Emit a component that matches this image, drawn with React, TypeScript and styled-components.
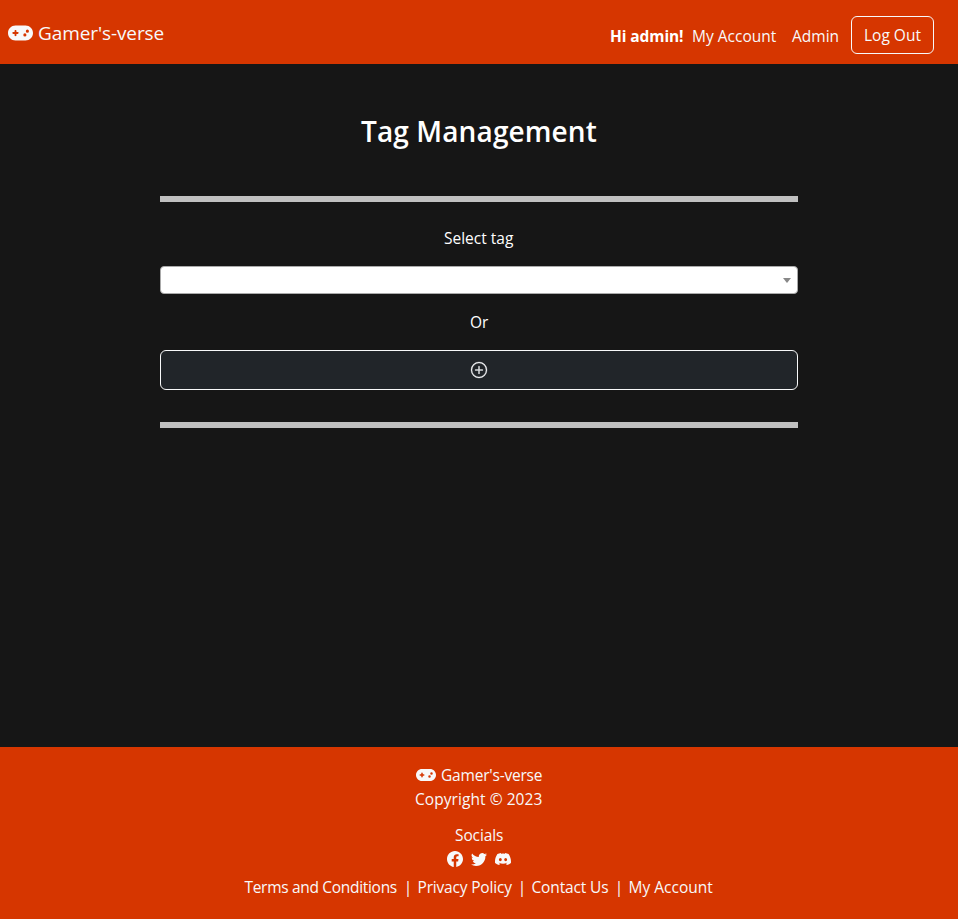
import React from "react";
import styled, { createGlobalStyle } from "styled-components";
import { FaGamepad } from "react-icons/fa6";
import { BsDiscord, BsFacebook, BsPlusCircle, BsTwitter } from "react-icons/bs";

const GlobalStyle = createGlobalStyle`
  *, *::before, *::after { box-sizing: border-box; }
  body {
    margin: 0;
    background: #161616;
    color: #fff;
    font: 400 15.5px/24px "Segoe UI", "Open Sans", "Noto Sans", sans-serif;
  }
  a { color: inherit; text-decoration: none; }
  svg { display: block; flex: none; }
`;

/* A run of text with a fixed measure and its own tracking. */
const Label = styled.span<{ $w: number; $track?: number }>`
  display: block;
  flex: none;
  width: ${(p) => p.$w}px;
  white-space: nowrap;
  letter-spacing: ${(p) => p.$track ?? 0}px;
`;

const Gamepad = styled(FaGamepad)<{ $size: number }>`
  width: ${(p) => p.$size * 1.25}px;
  height: ${(p) => p.$size}px;
`;

const Page = styled.div`
  display: flex;
  flex-direction: column;
  height: 919px;
`;

const Navbar = styled.header`
  display: flex;
  justify-content: space-between;
  height: 64px;
  padding: 0 24px 0 8px;
  background: #d63600;
  color: #f8f9fa;
`;

const Brand = styled.a`
  display: flex;
  align-items: center;
  height: 30px;
  margin-top: 18px;
  gap: 5px;
  font-size: 19px;
  line-height: 30px;
`;

const NavLinks = styled.nav`
  display: flex;
  padding-top: 16px;
`;

const NavItem = styled.a`
  margin: 8px 16px 0 0;
  &:last-of-type { margin-right: 12px; }
`;

const Greeting = styled.strong`
  margin: 8px 8px 0 0;
  color: #fff;
  font-weight: 700;
`;

const LogOut = styled.button`
  width: 83px;
  height: 38px;
  padding: 0 0 0 12px;
  border: 1px solid #f8f9fa;
  border-radius: 6px;
  background: transparent;
  color: #f8f9fa;
  font: inherit;
  text-align: left;
`;

const Main = styled.main`
  display: flex;
  flex: 1;
  flex-direction: column;
  width: 638px;
  margin: 0 auto;
  align-items: center;
`;

const Title = styled.h1`
  margin: 48px 0 46px;
  font-size: 28px;
  font-weight: 600;
  line-height: 38px;
`;

const Rule = styled.hr`
  width: 100%;
  height: 6px;
  margin: 0;
  border: 0;
  background: #c0c0c0;
`;

const Caption = styled.p<{ $top?: number }>`
  margin: ${(p) => p.$top ?? 0}px 0 0;
`;

const Select = styled.div`
  display: flex;
  align-items: center;
  justify-content: flex-end;
  width: 100%;
  height: 28px;
  margin: 16px 0;
  padding-right: 6px;
  border: 1px solid #aaa;
  border-radius: 4px;
  background: #fff;
`;

const Caret = styled.span`
  border: 4px solid transparent;
  border-top: 5px solid #888;
  border-bottom: 0;
`;

const AddButton = styled.button`
  display: flex;
  align-items: center;
  justify-content: center;
  width: 100%;
  height: 40px;
  margin: 16px 0 32px;
  padding: 0;
  border: 1px solid #f8f9fa;
  border-radius: 6px;
  background: #212529;
  color: #f8f9fa;
`;

const PlusIcon = styled(BsPlusCircle)`
  width: 16px;
  height: 16px;
  overflow: visible;
  stroke: currentColor;
  stroke-width: 0.3px;
`;

const Footer = styled.footer`
  display: flex;
  flex-direction: column;
  align-items: center;
  height: 172px;
  padding-top: 16px;
  background: #d63600;
  color: #f8f9fa;
`;

const FooterBrand = styled.div`
  display: flex;
  align-items: center;
  gap: 5px;
`;

const Socials = styled.div`
  display: flex;
  align-items: center;
  gap: 8px;
  height: 24px;
`;

const Group = styled.div`
  margin-top: 12px;
`;

const FooterLinks = styled.nav`
  display: flex;
  margin-top: 4px;
`;

const Divider = styled.span`
  width: 20px;
  padding-left: 1px;
  text-align: center;
`;

export default function App() {
  return (
    <Page>
      <GlobalStyle />
      <Navbar>
        <Brand href="#">
          <Gamepad $size={20} />
          <Label $w={126} $track={-0.1}>Gamer's-verse</Label>
        </Brand>
        <NavLinks>
          <Greeting><Label $w={74} $track={-0.1}>Hi admin!</Label></Greeting>
          <NavItem href="#"><Label $w={84}>My Account</Label></NavItem>
          <NavItem href="#"><Label $w={47}>Admin</Label></NavItem>
          <LogOut><Label $w={57}>Log Out</Label></LogOut>
        </NavLinks>
      </Navbar>
      <Main>
        <Title><Label $w={236} $track={0.12}>Tag Management</Label></Title>
        <Rule />
        <Caption $top={24}><Label $w={70}>Select tag</Label></Caption>
        <Select><Caret /></Select>
        <Caption><Label $w={18}>Or</Label></Caption>
        <AddButton aria-label="Add tag"><PlusIcon /></AddButton>
        <Rule />
      </Main>
      <Footer>
        <FooterBrand>
          <Gamepad $size={16} />
          <Label $w={101} $track={-0.2}>Gamer's-verse</Label>
        </FooterBrand>
        <Label $w={128} $track={0.06}>Copyright © 2023</Label>
        <Group><Label $w={48} $track={-0.1}>Socials</Label></Group>
        <Socials>
          <BsFacebook size={16} />
          <BsTwitter size={16} />
          <BsDiscord size={16} />
        </Socials>
        <FooterLinks>
          <a href="#"><Label $w={153} $track={-0.31}>Terms and Conditions</Label></a>
          <Divider>|</Divider>
          <a href="#"><Label $w={94} $track={-0.18}>Privacy Policy</Label></a>
          <Divider>|</Divider>
          <a href="#"><Label $w={77} $track={-0.15}>Contact Us</Label></a>
          <Divider>|</Divider>
          <a href="#"><Label $w={85}>My Account</Label></a>
        </FooterLinks>
      </Footer>
    </Page>
  );
}
